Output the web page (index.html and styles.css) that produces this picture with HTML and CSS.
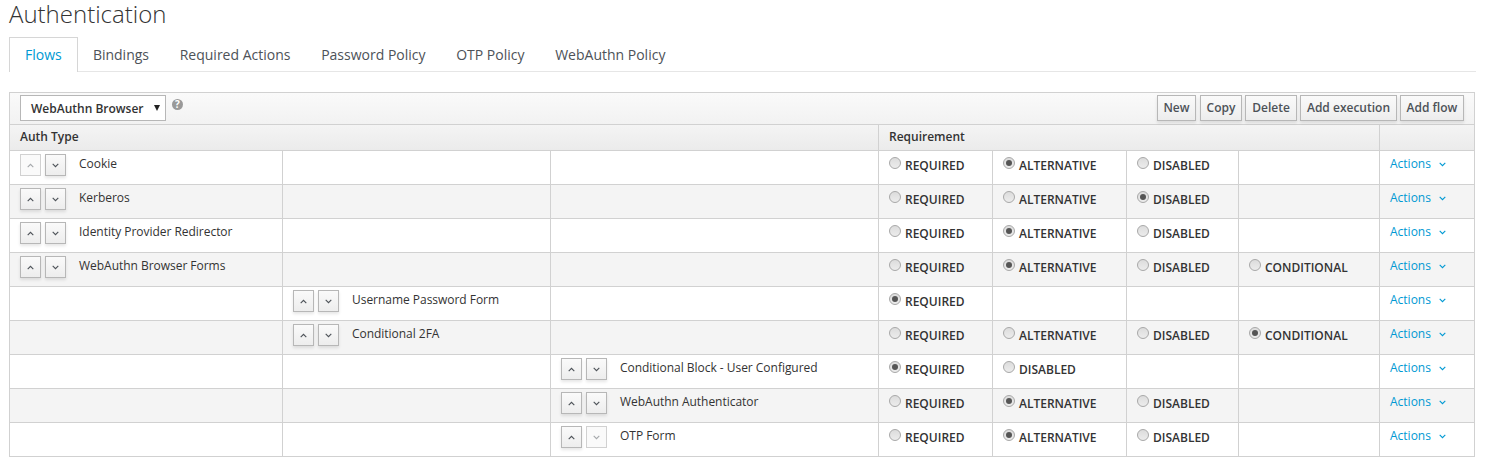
FILE: index.html
```html
<!DOCTYPE html>
<html lang="en">
<head>
<meta charset="utf-8">
<title>Authentication</title>
<link rel="stylesheet" href="styles.css">
</head>
<body>
<svg class="sprite" aria-hidden="true">
  <symbol id="up" viewBox="0 0 7 5"><path d="M.7 4.2 3.5 1.3 6.3 4.2"/></symbol>
  <symbol id="down" viewBox="0 0 7 5"><path d="M.7 .8 3.5 3.7 6.3 .8"/></symbol>
</svg>
<main class="page">
  <h1 class="title">Authentication</h1>
  <nav class="tabs">
    <a class="tab active">Flows</a><a class="tab">Bindings</a><a class="tab">Required Actions</a><a class="tab">Password Policy</a><a class="tab">OTP Policy</a><a class="tab">WebAuthn Policy</a>
  </nav>
  <section class="table">
    <div class="toolbar">
      <div class="select"><span>WebAuthn Browser</span><svg class="caret" viewBox="0 0 6 6"><path d="M0 0H6L3 6Z"/></svg></div>
      <span class="help">?</span>
      <div class="buttons">
        <button class="btn new">New</button><button class="btn copy">Copy</button><button class="btn delete">Delete</button><button class="btn execution">Add execution</button><button class="btn flow">Add flow</button>
      </div>
    </div>
    <div class="head"><div class="cell">Auth Type</div><div class="cell">Requirement</div><div class="cell"></div></div>
    <div id="rows"></div>
  </section>
</main>
<script src="rows.js"></script>
</body>
</html>
```
FILE: rows.js
```js
// level: nesting column; options: available requirements; selected: checked requirement
const flows = [
  { name: 'Cookie', level: 0, options: 'REQUIRED ALTERNATIVE DISABLED', selected: 'ALTERNATIVE', first: true },
  { name: 'Kerberos', level: 0, options: 'REQUIRED ALTERNATIVE DISABLED', selected: 'DISABLED' },
  { name: 'Identity Provider Redirector', level: 0, options: 'REQUIRED ALTERNATIVE DISABLED', selected: 'ALTERNATIVE' },
  { name: 'WebAuthn Browser Forms', level: 0, options: 'REQUIRED ALTERNATIVE DISABLED CONDITIONAL', selected: 'ALTERNATIVE' },
  { name: 'Username Password Form', level: 1, options: 'REQUIRED', selected: 'REQUIRED' },
  { name: 'Conditional 2FA', level: 1, options: 'REQUIRED ALTERNATIVE DISABLED CONDITIONAL', selected: 'CONDITIONAL' },
  { name: 'Conditional Block - User Configured', level: 2, options: 'REQUIRED DISABLED', selected: 'REQUIRED' },
  { name: 'WebAuthn Authenticator', level: 2, options: 'REQUIRED ALTERNATIVE DISABLED', selected: 'ALTERNATIVE' },
  { name: 'OTP Form', level: 2, options: 'REQUIRED ALTERNATIVE DISABLED', selected: 'ALTERNATIVE', last: true }
];

const icon = id => `<svg class="chevron"><use href="#${id}"/></svg>`;
const mover = (id, off) => `<button class="move"${off ? ' disabled' : ''}>${icon(id)}</button>`;

document.getElementById('rows').innerHTML = flows.map(f => {
  const names = [0, 1, 2].map(i => `<div class="cell">${i === f.level
    ? `${mover('up', f.first)}${mover('down', f.last)}<span class="name">${f.name}</span>` : ''}</div>`);
  const opts = f.options.split(' ');
  const reqs = [0, 1, 2, 3].map(i => `<div class="cell">${opts[i]
    ? `<span class="radio${opts[i] === f.selected ? ' on' : ''}"></span><span class="label">${opts[i]}</span>` : ''}</div>`);
  return `<div class="row">${names.join('')}${reqs.join('')}<div class="cell"><a class="actions">Actions ${icon('down')}</a></div></div>`;
}).join('');
```
FILE: styles.css
```css
* { box-sizing: border-box; }
body {
  margin: 0;
  background: #fff;
  color: #333;
  font: 12px/20px "Open Sans", sans-serif;
  overflow: hidden;
}
.sprite { display: none; }
.page { width: 1467px; padding-left: 9px; box-sizing: content-box; }
.title { margin: 0; height: 37px; font-size: 24px; font-weight: 300; line-height: 27px; }

.tabs { display: flex; height: 35px; border-bottom: 1px solid #e6e6e6; }
.tab { height: 35px; padding: 7px 14.5px 0 14.2px; border: 1px solid transparent; border-bottom: 0; font-size: 14px; color: #4d5258; }
.tab.active { padding: 7px 15px 0; background: #fff; border-color: #d6d6d6; color: #0099d3; }

.table { width: 1466px; margin-top: 20px; border: 1px solid #d1d1d1; border-top: 0; }
.toolbar {
  display: flex;
  height: 32px;
  padding: 2px 10px 0;
  border-top: 1px solid #d1d1d1;
  background: linear-gradient(#fafafa, #f2f2f2);
}
.select {
  display: flex;
  align-items: center;
  justify-content: space-between;
  width: 146px;
  height: 26px;
  padding: 1px 5px 0 10px;
  border: 1px solid #b7b7b7;
  background: #fff;
  font-weight: 600;
}
.caret { width: 6px; height: 6px; margin-bottom: 2px; fill: #222; }
.help {
  width: 11px;
  height: 11px;
  margin: 4px 0 0 6px;
  border-radius: 50%;
  background: #999;
  color: #fff;
  font-size: 10px;
  font-weight: 700;
  line-height: 11px;
  text-align: center;
}
.buttons { display: flex; margin-left: auto; }
.btn {
  height: 26px;
  margin-left: 3px;
  padding: 0;
  border: 1px solid #b7b7b7;
  background: linear-gradient(#fafafa, #ededed);
  box-shadow: 0 2px 3px rgba(3, 3, 3, .1);
  color: #4d5258;
  font: 600 12px/22px "Open Sans", sans-serif;
}
.new { width: 39px; }
.copy { width: 42px; margin-left: 4px; }
.delete { width: 52px; }
.execution { width: 97px; }
.flow { width: 64px; }

.head {
  display: grid;
  grid-template-columns: 868px 501px 95px;
  height: 26px;
  border-top: 1px solid #d1d1d1;
  background: linear-gradient(#f4f4f4, #ebebeb);
  font-weight: 600;
  line-height: 24px;
}
.row {
  display: grid;
  grid-template-columns: 272px 268px 328px 114px 134px 112px 141px 95px;
  height: 34px;
  border-top: 1px solid #d1d1d1;
}
.row:nth-child(even) { background: #f4f4f4; }
.cell { padding-left: 10px; border-left: 1px solid #d1d1d1; white-space: nowrap; }
.cell:first-child { border-left: 0; }
.row .cell { display: flex; align-items: flex-start; padding-top: 3px; }
.move {
  display: flex;
  align-items: center;
  justify-content: center;
  width: 21px;
  height: 22px;
  margin-right: 4px;
  padding: 1px 0 0;
  border: 1px solid #b7b7b7;
  background: linear-gradient(#fafafa, #ededed);
  box-shadow: 0 2px 3px rgba(3, 3, 3, .1);
  color: #4d5258;
}
.move:disabled { border-color: #d1d1d1; background: #fafafa; box-shadow: none; color: #a5a8ab; }
.chevron { width: 7px; height: 5px; fill: none; stroke: currentColor; stroke-width: 1.1; }
.name { margin-left: 9px; letter-spacing: -.03px; }
.radio {
  display: flex;
  width: 12px;
  height: 12px;
  margin: 3px 4px 0 0;
  border: 1px solid #a8a8a8;
  border-radius: 50%;
  background: linear-gradient(#dcdcdc, #ececec);
}
.radio.on::before { content: ""; width: 6px; height: 6px; margin: 2px; border-radius: 50%; background: #555; }
.label { margin-top: 2px; font-weight: 600; }
.actions { color: #0099d3; }
.actions .chevron { margin: 0 0 1px 5px; }
```
